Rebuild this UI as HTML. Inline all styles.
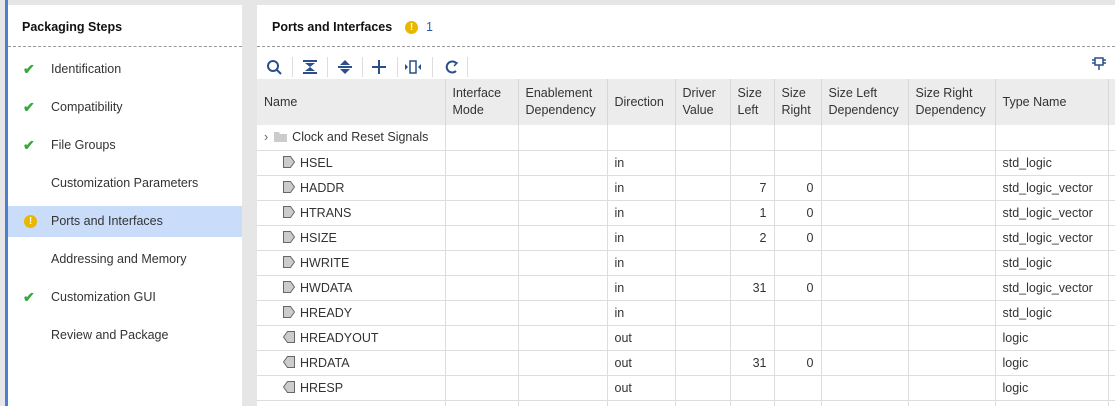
<!DOCTYPE html>
<html style="height:406px;overflow:hidden"><head><style>
*{margin:0;padding:0;box-sizing:border-box}
body{width:1115px;height:406px;background:#e6e6e6;font-family:"Liberation Sans",sans-serif;font-size:12.5px;color:#222;position:relative;overflow:hidden}
.abs{position:absolute}
#stripe{left:5px;top:0;width:3px;height:406px;background:#4d7fd0}
#left{left:8px;top:5px;width:234px;height:401px;background:#fff}
#right{left:257px;top:5px;width:858px;height:401px;background:#fff;overflow:hidden}
.title{font-weight:bold;font-size:12.5px;color:#111}
.dash{border-top:1px dashed #999;height:0}
.item{position:absolute;left:0;width:234px;height:31px;line-height:31px;padding-left:43px;font-size:12.5px;color:#333}
.chk{position:absolute;left:15px;top:0;color:#3aa640;font-size:14px;font-weight:bold}
.warn{display:inline-block;width:13px;height:13px;border-radius:50%;background:#e8b800;color:#fff;font-size:10px;font-weight:bold;line-height:13px;text-align:center}
table{border-collapse:collapse;position:absolute;left:0;top:74px;table-layout:fixed;width:871px}
th{background:#ececec;font-weight:normal;text-align:left;padding:0 7px;height:46px;border-right:1px solid #d8d8d8;font-size:12.5px;color:#333;line-height:17px;overflow:hidden;white-space:nowrap}
td{height:25px;border-right:1px solid #ddd;border-bottom:1px solid #ddd;padding:0 7px;font-size:12.5px;color:#333;white-space:nowrap;overflow:hidden}
td.r{text-align:right}
.sep{position:absolute;top:52px;width:1px;height:20px;background:#ddd}
</style></head><body>
<div class="abs" id="stripe"></div>
<div class="abs" id="left">
 <div class="abs title" style="left:14px;top:15px">Packaging Steps</div>
 <div class="abs dash" style="left:0;top:41px;width:234px"></div>
 <div class="item" style="top:49px"><span class="chk">✔</span>Identification</div>
 <div class="item" style="top:87px"><span class="chk">✔</span>Compatibility</div>
 <div class="item" style="top:125px"><span class="chk">✔</span>File Groups</div>
 <div class="item" style="top:163px">Customization Parameters</div>
 <div class="item" style="top:201px;background:#c9ddfa"><span class="warn" style="position:absolute;left:16px;top:9px">!</span>Ports and Interfaces</div>
 <div class="item" style="top:239px">Addressing and Memory</div>
 <div class="item" style="top:277px"><span class="chk">✔</span>Customization GUI</div>
 <div class="item" style="top:315px">Review and Package</div>
</div>
<div class="abs" id="right">
 <div class="abs title" style="left:15px;top:15px">Ports and Interfaces</div>
 <span class="warn abs" style="left:148px;top:16px">!</span>
 <div class="abs" style="left:169px;top:15px;color:#2a5fb0">1</div>
 <div class="abs dash" style="left:0;top:41px;width:858px"></div>
 <svg class="abs" style="left:0;top:50px" width="220" height="24">
  <g stroke="#2b4f8a" stroke-width="2" fill="none">
   <circle cx="16" cy="11" r="5"/><line x1="20" y1="15" x2="24" y2="19"/>
   <line x1="46" y1="6" x2="60" y2="6"/><line x1="46" y1="18" x2="60" y2="18"/>
   <line x1="81" y1="12" x2="95" y2="12"/>
   <line x1="115" y1="12" x2="129" y2="12"/><line x1="122" y1="5" x2="122" y2="19"/>
   <rect x="153" y="6" width="6" height="12" stroke-width="1.5"/>
   <path d="M199 8 A5.5 5.5 0 1 0 199 16" /><path d="M196 6 L200 8 L197 11" stroke-width="1.5"/>
  </g>
  <g fill="#2b4f8a">
   <path d="M48 8 L58 8 L53 12Z"/><path d="M48 16 L58 16 L53 12Z"/>
   <path d="M83 10 L93 10 L88 5Z"/><path d="M83 14 L93 14 L88 19Z"/>
   <path d="M151 12 L148 9 L148 15Z"/><path d="M161 12 L164 9 L164 15Z"/>
  </g>
 </svg>
 <div class="sep" style="left:35px"></div><div class="sep" style="left:70px"></div><div class="sep" style="left:105px"></div><div class="sep" style="left:140px"></div><div class="sep" style="left:175px"></div><div class="sep" style="left:210px"></div>
 <svg class="abs" style="left:834px;top:50px" width="16" height="16"><g stroke="#2b4f8a" stroke-width="1.5" fill="none"><rect x="4" y="3" width="8" height="7"/><line x1="8" y1="10" x2="8" y2="15"/><line x1="1" y1="5" x2="4" y2="5"/><line x1="1" y1="8" x2="4" y2="8"/><line x1="12" y1="5" x2="15" y2="5"/><line x1="12" y1="8" x2="15" y2="8"/></g></svg>
 <table>
  <colgroup><col style="width:188px"><col style="width:73px"><col style="width:89px"><col style="width:68px"><col style="width:55px"><col style="width:44px"><col style="width:47px"><col style="width:87px"><col style="width:87px"><col style="width:113px"><col style="width:20px"></colgroup>
  <tr><th>Name</th><th>Interface<br>Mode</th><th>Enablement<br>Dependency</th><th>Direction</th><th>Driver<br>Value</th><th>Size<br>Left</th><th>Size<br>Right</th><th>Size Left<br>Dependency</th><th>Size Right<br>Dependency</th><th>Type Name</th><th></th></tr>
  <tr><td><span style="color:#666;margin-right:6px">›</span><svg width="13" height="11" style="vertical-align:-1px;margin-right:5px"><path d="M0 1h5l1 2h7v8H0z" fill="#ccc"/></svg>Clock and Reset Signals</td><td></td><td></td><td></td><td></td><td></td><td></td><td></td><td></td><td></td><td></td></tr>
  <tr><td style="padding-left:26px"><svg width="12" height="12" style="vertical-align:-1px;margin-right:5px"><path d="M0.5 0.5h7l4 5.5-4 5.5h-7z" fill="#ccc" stroke="#666"/></svg>HSEL</td><td></td><td></td><td>in</td><td></td><td></td><td></td><td></td><td></td><td>std_logic</td><td></td></tr>
  <tr><td style="padding-left:26px"><svg width="12" height="12" style="vertical-align:-1px;margin-right:5px"><path d="M0.5 0.5h7l4 5.5-4 5.5h-7z" fill="#ccc" stroke="#666"/></svg>HADDR</td><td></td><td></td><td>in</td><td></td><td class="r">7</td><td class="r">0</td><td></td><td></td><td>std_logic_vector</td><td></td></tr>
  <tr><td style="padding-left:26px"><svg width="12" height="12" style="vertical-align:-1px;margin-right:5px"><path d="M0.5 0.5h7l4 5.5-4 5.5h-7z" fill="#ccc" stroke="#666"/></svg>HTRANS</td><td></td><td></td><td>in</td><td></td><td class="r">1</td><td class="r">0</td><td></td><td></td><td>std_logic_vector</td><td></td></tr>
  <tr><td style="padding-left:26px"><svg width="12" height="12" style="vertical-align:-1px;margin-right:5px"><path d="M0.5 0.5h7l4 5.5-4 5.5h-7z" fill="#ccc" stroke="#666"/></svg>HSIZE</td><td></td><td></td><td>in</td><td></td><td class="r">2</td><td class="r">0</td><td></td><td></td><td>std_logic_vector</td><td></td></tr>
  <tr><td style="padding-left:26px"><svg width="12" height="12" style="vertical-align:-1px;margin-right:5px"><path d="M0.5 0.5h7l4 5.5-4 5.5h-7z" fill="#ccc" stroke="#666"/></svg>HWRITE</td><td></td><td></td><td>in</td><td></td><td></td><td></td><td></td><td></td><td>std_logic</td><td></td></tr>
  <tr><td style="padding-left:26px"><svg width="12" height="12" style="vertical-align:-1px;margin-right:5px"><path d="M0.5 0.5h7l4 5.5-4 5.5h-7z" fill="#ccc" stroke="#666"/></svg>HWDATA</td><td></td><td></td><td>in</td><td></td><td class="r">31</td><td class="r">0</td><td></td><td></td><td>std_logic_vector</td><td></td></tr>
  <tr><td style="padding-left:26px"><svg width="12" height="12" style="vertical-align:-1px;margin-right:5px"><path d="M0.5 0.5h7l4 5.5-4 5.5h-7z" fill="#ccc" stroke="#666"/></svg>HREADY</td><td></td><td></td><td>in</td><td></td><td></td><td></td><td></td><td></td><td>std_logic</td><td></td></tr>
  <tr><td style="padding-left:26px"><svg width="12" height="12" style="vertical-align:-1px;margin-right:5px"><path d="M11.5 0.5h-7l-4 5.5 4 5.5h7z" fill="#ccc" stroke="#666"/></svg>HREADYOUT</td><td></td><td></td><td>out</td><td></td><td></td><td></td><td></td><td></td><td>logic</td><td></td></tr>
  <tr><td style="padding-left:26px"><svg width="12" height="12" style="vertical-align:-1px;margin-right:5px"><path d="M11.5 0.5h-7l-4 5.5 4 5.5h7z" fill="#ccc" stroke="#666"/></svg>HRDATA</td><td></td><td></td><td>out</td><td></td><td class="r">31</td><td class="r">0</td><td></td><td></td><td>logic</td><td></td></tr>
  <tr><td style="padding-left:26px"><svg width="12" height="12" style="vertical-align:-1px;margin-right:5px"><path d="M11.5 0.5h-7l-4 5.5 4 5.5h7z" fill="#ccc" stroke="#666"/></svg>HRESP</td><td></td><td></td><td>out</td><td></td><td></td><td></td><td></td><td></td><td>logic</td><td></td></tr>
  <tr><td></td><td></td><td></td><td></td><td></td><td></td><td></td><td></td><td></td><td></td><td></td></tr>
 </table>
</div>
</body></html>
